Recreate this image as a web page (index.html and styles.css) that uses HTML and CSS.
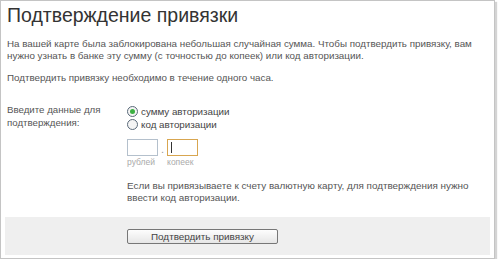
FILE: index.html
```html
<!DOCTYPE html>
<html lang="ru">
<head>
<meta charset="utf-8">
<title>Подтверждение привязки</title>
<link rel="stylesheet" href="styles.css">
</head>
<body>
<div class="panel">
  <h1 class="title">Подтверждение привязки</h1>
  <div class="content">
    <p class="text">На вашей карте была заблокирована небольшая случайная сумма. Чтобы подтвердить привязку, вам нужно узнать в банке эту сумму (с точностью до копеек) или код авторизации.</p>
    <p class="text para2">Подтвердить привязку необходимо в течение одного часа.</p>
    <div class="form-row">
      <div class="label">Введите данные для подтверждения:</div>
      <div class="fields">
        <label class="radio"><span class="radio-dot checked"></span>сумму авторизации</label>
        <label class="radio"><span class="radio-dot"></span>код авторизации</label>
        <div class="amount">
          <div class="amount-col">
            <span class="input"></span>
            <span class="hint">рублей</span>
          </div>
          <span class="sep">.</span>
          <div class="amount-col">
            <span class="input focused"><span class="caret"></span></span>
            <span class="hint">копеек</span>
          </div>
        </div>
        <p class="text note">Если вы привязываете к счету валютную карту, для подтверждения нужно ввести код авторизации.</p>
      </div>
    </div>
  </div>
  <div class="footer">
    <button class="btn" type="button">Подтвердить привязку</button>
  </div>
</div>
</body>
</html>
```
FILE: styles.css
```css
html, body {
  margin: 0;
  padding: 0;
  background: #fff;
}
body {
  font-family: "Liberation Sans", Arial, sans-serif;
  color: #555;
}
.panel {
  width: 493px;
  height: 257px;
  border: 1px solid #c4c4c4;
  box-shadow: 2px 2px 1px #d4d4d4;
  display: flex;
  flex-direction: column;
  box-sizing: content-box;
}
.title {
  margin: 2px 0 0 6px;
  font-size: 19.5px;
  font-weight: normal;
  color: #333;
  line-height: 24px;
}
.content {
  padding: 0 6px;
  flex: 1;
}
.text {
  margin: 11px 0 0;
  font-size: 9.8px;
  line-height: 12px;
  color: #555;
}
.text.para2 {
  margin-top: 10px;
}
.form-row {
  display: flex;
  margin-top: 19px;
}
.label {
  width: 120px;
  flex: none;
  font-size: 9.7px;
  line-height: 13px;
}
.fields {
  display: flex;
  flex-direction: column;
  padding-top: 2px;
}
.radio {
  display: flex;
  align-items: center;
  gap: 3px;
  font-size: 9.8px;
  line-height: 13px;
  color: #444;
}
.radio-dot {
  width: 9px;
  height: 9px;
  border: 1px solid #5a6a7a;
  border-radius: 50%;
  background: #f4f4f4;
  display: flex;
  align-items: center;
  justify-content: center;
}
.radio-dot.checked::after {
  content: "";
  width: 5px;
  height: 5px;
  border-radius: 50%;
  background: #3cb043;
}
.amount {
  display: flex;
  align-items: flex-start;
  margin-top: 8px;
  gap: 2px;
}
.amount-col {
  display: flex;
  flex-direction: column;
  gap: 1px;
}
.input {
  width: 26px;
  height: 15px;
  border: 1px solid #b4c0cc;
  background: #fff;
  display: flex;
  align-items: center;
  padding-left: 3px;
  box-sizing: content-box;
}
.input.focused {
  border-color: #d8a650;
}
.caret {
  width: 1px;
  height: 11px;
  background: #333;
}
.sep {
  font-size: 11px;
  line-height: 13px;
  color: #999;
  margin-top: 4px;
  padding: 0 1px;
}
.hint {
  font-size: 8.5px;
  line-height: 10px;
  color: #aaa;
}
.text.note {
  margin-top: 13px;
  font-size: 9.9px;
}
.footer {
  margin: 0 4px 3px;
  height: 38px;
  flex: none;
  background: #efefef;
  display: flex;
  align-items: center;
  padding-left: 122px;
}
.btn {
  width: 151px;
  height: 15px;
  padding: 0;
  border: 1px solid #777;
  border-radius: 2px;
  background: linear-gradient(#fdfdfd, #e6e6e6);
  font-family: "Liberation Sans", Arial, sans-serif;
  font-size: 9.9px;
  line-height: 13px;
  color: #444;
}
```
